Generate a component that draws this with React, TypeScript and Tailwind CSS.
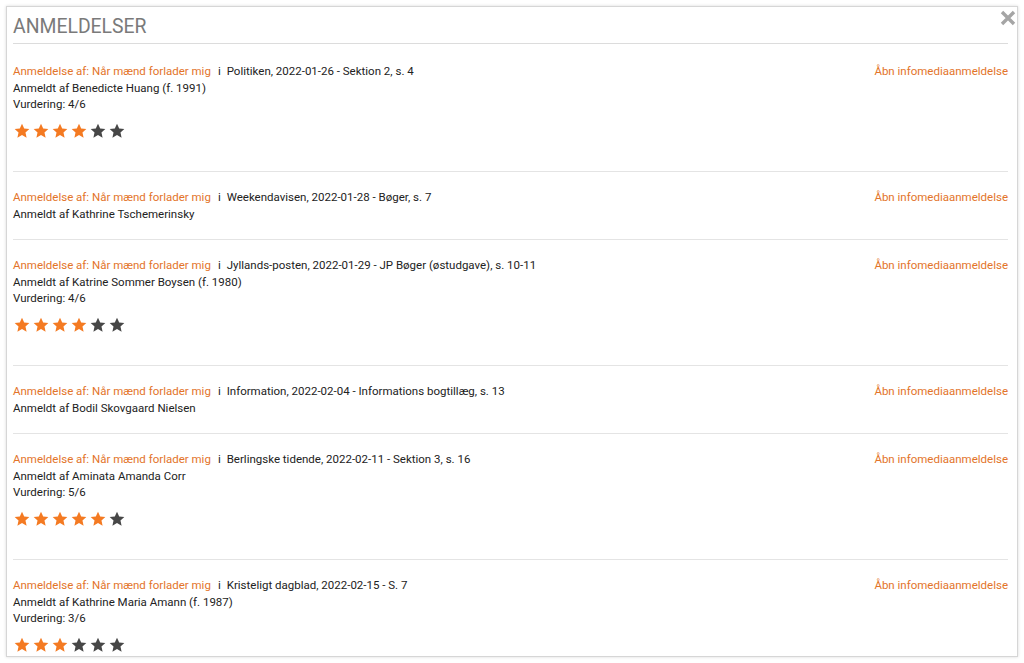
type Review = {
  source: string;
  reviewer: string;
  rating?: number;
};

const REVIEWS: Review[] = [
  { source: "Politiken, 2022-01-26 - Sektion 2, s. 4", reviewer: "Anmeldt af Benedicte Huang (f. 1991)", rating: 4 },
  { source: "Weekendavisen, 2022-01-28 - Bøger, s. 7", reviewer: "Anmeldt af Kathrine Tschemerinsky" },
  { source: "Jyllands-posten, 2022-01-29 - JP Bøger (østudgave), s. 10-11", reviewer: "Anmeldt af Katrine Sommer Boysen (f. 1980)", rating: 4 },
  { source: "Information, 2022-02-04 - Informations bogtillæg, s. 13", reviewer: "Anmeldt af Bodil Skovgaard Nielsen" },
  { source: "Berlingske tidende, 2022-02-11 - Sektion 3, s. 16", reviewer: "Anmeldt af Aminata Amanda Corr", rating: 5 },
  { source: "Kristeligt dagblad, 2022-02-15 - S. 7", reviewer: "Anmeldt af Kathrine Maria Amann (f. 1987)", rating: 3 },
];

function Star({ on }: { on: boolean }) {
  return (
    <svg width="16" height="16" viewBox="0 0 24 24" className={on ? "text-[#f47a22]" : "text-[#474747]"}>
      <path
        fill="currentColor"
        d="M12 1l3.3 7.1 7.7.9-5.8 5.2 1.7 7.8L12 18l-6.9 4 1.7-7.8L1 9l7.7-.9z"
      />
    </svg>
  );
}

export default function App() {
  return (
    <div className="h-[663px] w-[1024px] bg-white pt-[6px] pl-[6px] font-['Roboto',sans-serif]">
      <div className="relative h-[651px] w-[1012px] overflow-hidden border border-[#d6d6d6] bg-white pl-[6px] pr-[9px] shadow-[0_0_3px_rgba(0,0,0,0.15)]">
        <button className="absolute right-[1px] top-[2px] flex h-[17px] w-[17px] items-center justify-center text-[#a5a5a5]">
          <svg width="16" height="16" viewBox="0 0 16 16">
            <path d="M2 2l12 12M14 2L2 14" stroke="currentColor" strokeWidth="3.4" />
          </svg>
        </button>
        <div className="flex h-[37px] items-end border-b border-[#dcdcdc] pb-[4px]">
          <h1 className="text-[19.4px] leading-[24px] text-[#7a7a7a]">ANMELDELSER</h1>
        </div>
        <div className="pt-[2px]">
          {REVIEWS.map((r, i) => (
            <div key={i} className="border-b border-[#e4e4e4] py-[17px] text-[11.5px] leading-[16.5px] text-[#222]">
              <div className="flex justify-between">
                <div>
                  <a className="text-[#e3742a]">Anmeldelse af: Når mænd forlader mig</a>
                  <span className="ml-[7px] mr-[6px]">i</span>
                  <span>{r.source}</span>
                </div>
                <a className="text-[#e3742a]">Åbn infomediaanmeldelse</a>
              </div>
              <div>{r.reviewer}</div>
              {r.rating !== undefined && (
                <>
                  <div>Vurdering: {r.rating}/6</div>
                  <div className="mt-[10px] mb-[14.5px] flex h-[17px] items-center gap-[3px] pl-[1px]">
                    {[0, 1, 2, 3, 4, 5].map((s) => (
                      <Star key={s} on={s < r.rating!} />
                    ))}
                  </div>
                </>
              )}
            </div>
          ))}
        </div>
      </div>
    </div>
  );
}
